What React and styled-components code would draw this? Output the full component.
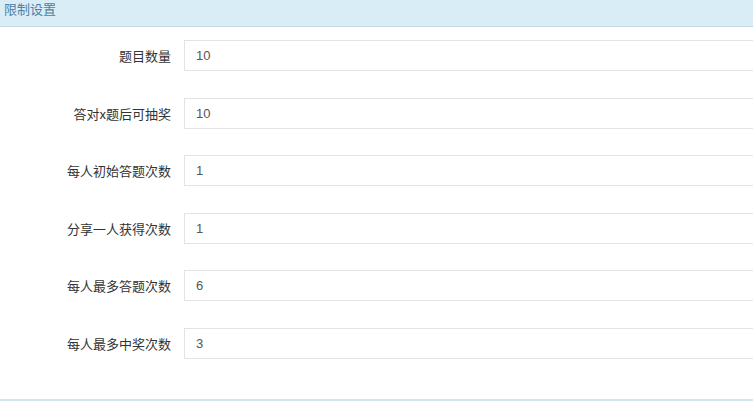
import React from 'react';
import styled, { createGlobalStyle } from 'styled-components';

const GlobalStyle = createGlobalStyle`
  html, body {
    margin: 0;
    padding: 0;
    background: #fff;
    font-family: "Liberation Sans", "Noto Sans CJK SC", sans-serif;
  }
`;

// Panel
const Panel = styled.div`
  width: 753px;
  background: #fff;
  border-bottom: 2px solid #d3e6ee;
`;

const PanelHeading = styled.div`
  height: 27px;
  line-height: 17px;
  padding: 0 4px;
  background: #d9edf7;
  border-bottom: 1px solid #c3d9e4;
  color: #4d7fa6;
  font-size: 13px;
  box-sizing: border-box;
  font-family: "Noto Sans CJK SC", sans-serif;
`;

const PanelBody = styled.div`
  padding: 13px 0 40px;
  display: flex;
  flex-direction: column;
  gap: 26.6px;
`;

// Form rows
const Row = styled.div`
  display: flex;
  align-items: center;
  gap: 13px;
`;

const Label = styled.label`
  width: 171px;
  text-align: right;
  font-size: 13px;
  color: #333;
  font-family: "Noto Sans CJK SC", sans-serif;
  flex-shrink: 0;
`;

const Input = styled.input`
  flex: 1;
  height: 31px;
  box-sizing: border-box;
  border: 1px solid #e3e3e3;
  border-right: none;
  padding: 0 11px;
  font-size: 13px;
  color: #555;
  font-family: "Liberation Sans", sans-serif;
  background: #fff;
  outline: none;
  min-width: 0;
`;

const fields = [
  { label: '题目数量', value: '10' },
  { label: '答对x题后可抽奖', value: '10' },
  { label: '每人初始答题次数', value: '1' },
  { label: '分享一人获得次数', value: '1' },
  { label: '每人最多答题次数', value: '6' },
  { label: '每人最多中奖次数', value: '3' },
];

function App() {
  return (
    <>
      <GlobalStyle />
      <Panel>
        <PanelHeading>限制设置</PanelHeading>
        <PanelBody>
          {fields.map((f) => (
            <Row key={f.label}>
              <Label>{f.label}</Label>
              <Input defaultValue={f.value} />
            </Row>
          ))}
        </PanelBody>
      </Panel>
    </>
  );
}

export default App;
